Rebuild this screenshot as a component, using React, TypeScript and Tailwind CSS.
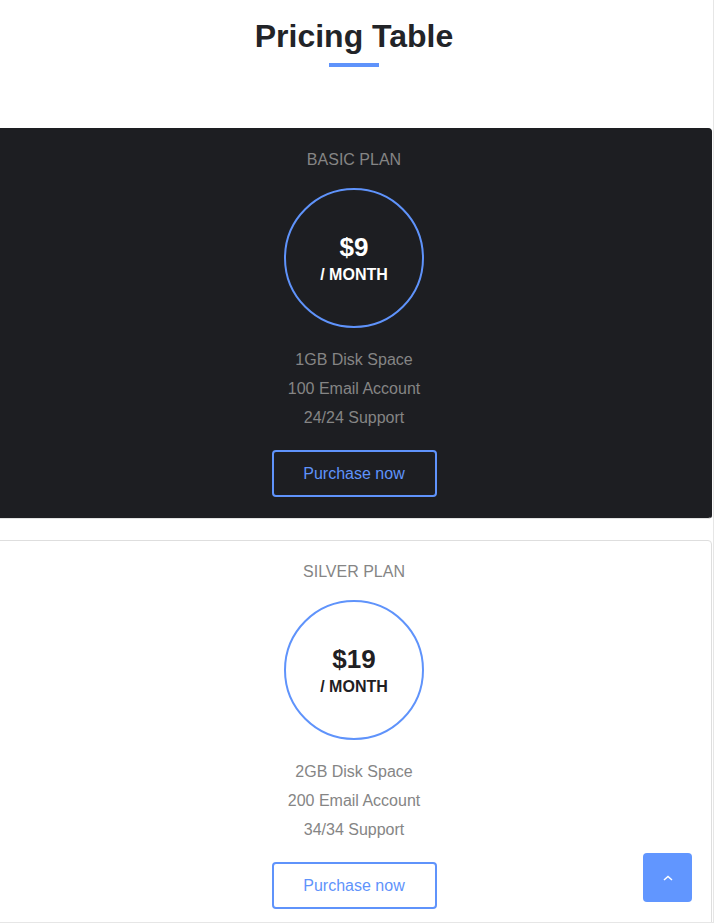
const plans = [
  {
    name: "BASIC PLAN",
    price: "$9",
    features: ["1GB Disk Space", "100 Email Account", "24/24 Support"],
    dark: true,
  },
  {
    name: "SILVER PLAN",
    price: "$19",
    features: ["2GB Disk Space", "200 Email Account", "34/34 Support"],
    dark: false,
  },
];

export default function App() {
  return (
    <div
      className="relative h-[924px] w-[715px] overflow-hidden bg-white"
      style={{ fontFamily: '"Liberation Sans", Arial, sans-serif' }}
    >
      <div className="h-[923px] w-[714px] border-r border-b border-[#e6e6e6] overflow-hidden">
        <div className="w-[708px] pt-[16px] text-center">
          <h1 className="text-[32px] leading-[40px] font-bold text-[#222428]">Pricing Table</h1>
          <div className="mx-auto mt-[7px] h-[4px] w-[50px] bg-[#5f93fb]" />
        </div>

        <div className="mt-[61px] flex flex-col gap-[21px]">
          {plans.map((p) => (
            <div
              key={p.name}
              className={`-ml-[4px] w-[716px] rounded-r-[4px] border pt-[19px] pb-[21px] text-center ${
                p.dark ? "border-[#1d1e22] border-b-[#e2e2e2] bg-[#1d1e22]" : "border-[#dedede] bg-white"
              }`}
            >
              <div className="text-[16px] leading-[24px] text-[#858585]">{p.name}</div>
              <div className="mx-auto mt-[16px] flex h-[140px] w-[140px] flex-col items-center justify-center rounded-full border-2 border-[#5f93fb]">
                <div
                  className={`text-[26px] leading-[30px] font-bold ${p.dark ? "text-white" : "text-[#1f2023]"}`}
                >
                  {p.price}
                </div>
                <div
                  className={`mt-[3px] text-[16px] leading-[20px] font-bold ${
                    p.dark ? "text-white" : "text-[#1f2023]"
                  }`}
                >
                  / MONTH
                </div>
              </div>
              <ul className="mt-[17px]">
                {p.features.map((f) => (
                  <li key={f} className="text-[16px] leading-[29px] text-[#858585]">
                    {f}
                  </li>
                ))}
              </ul>
              <button className="mt-[18px] h-[47px] w-[165px] rounded-[4px] border-2 border-[#5f93fb] text-[16px] text-[#5f93fb]">
                Purchase now
              </button>
            </div>
          ))}
        </div>
      </div>

      <button className="absolute top-[853px] left-[643px] flex h-[49px] w-[49px] items-center justify-center rounded-[4px] bg-[#6196ff]">
        <svg width="10" height="6" viewBox="0 0 10 6" fill="none">
          <polyline points="1,5 5,1.5 9,5" stroke="white" strokeWidth="1.5" />
        </svg>
      </button>
    </div>
  );
}
